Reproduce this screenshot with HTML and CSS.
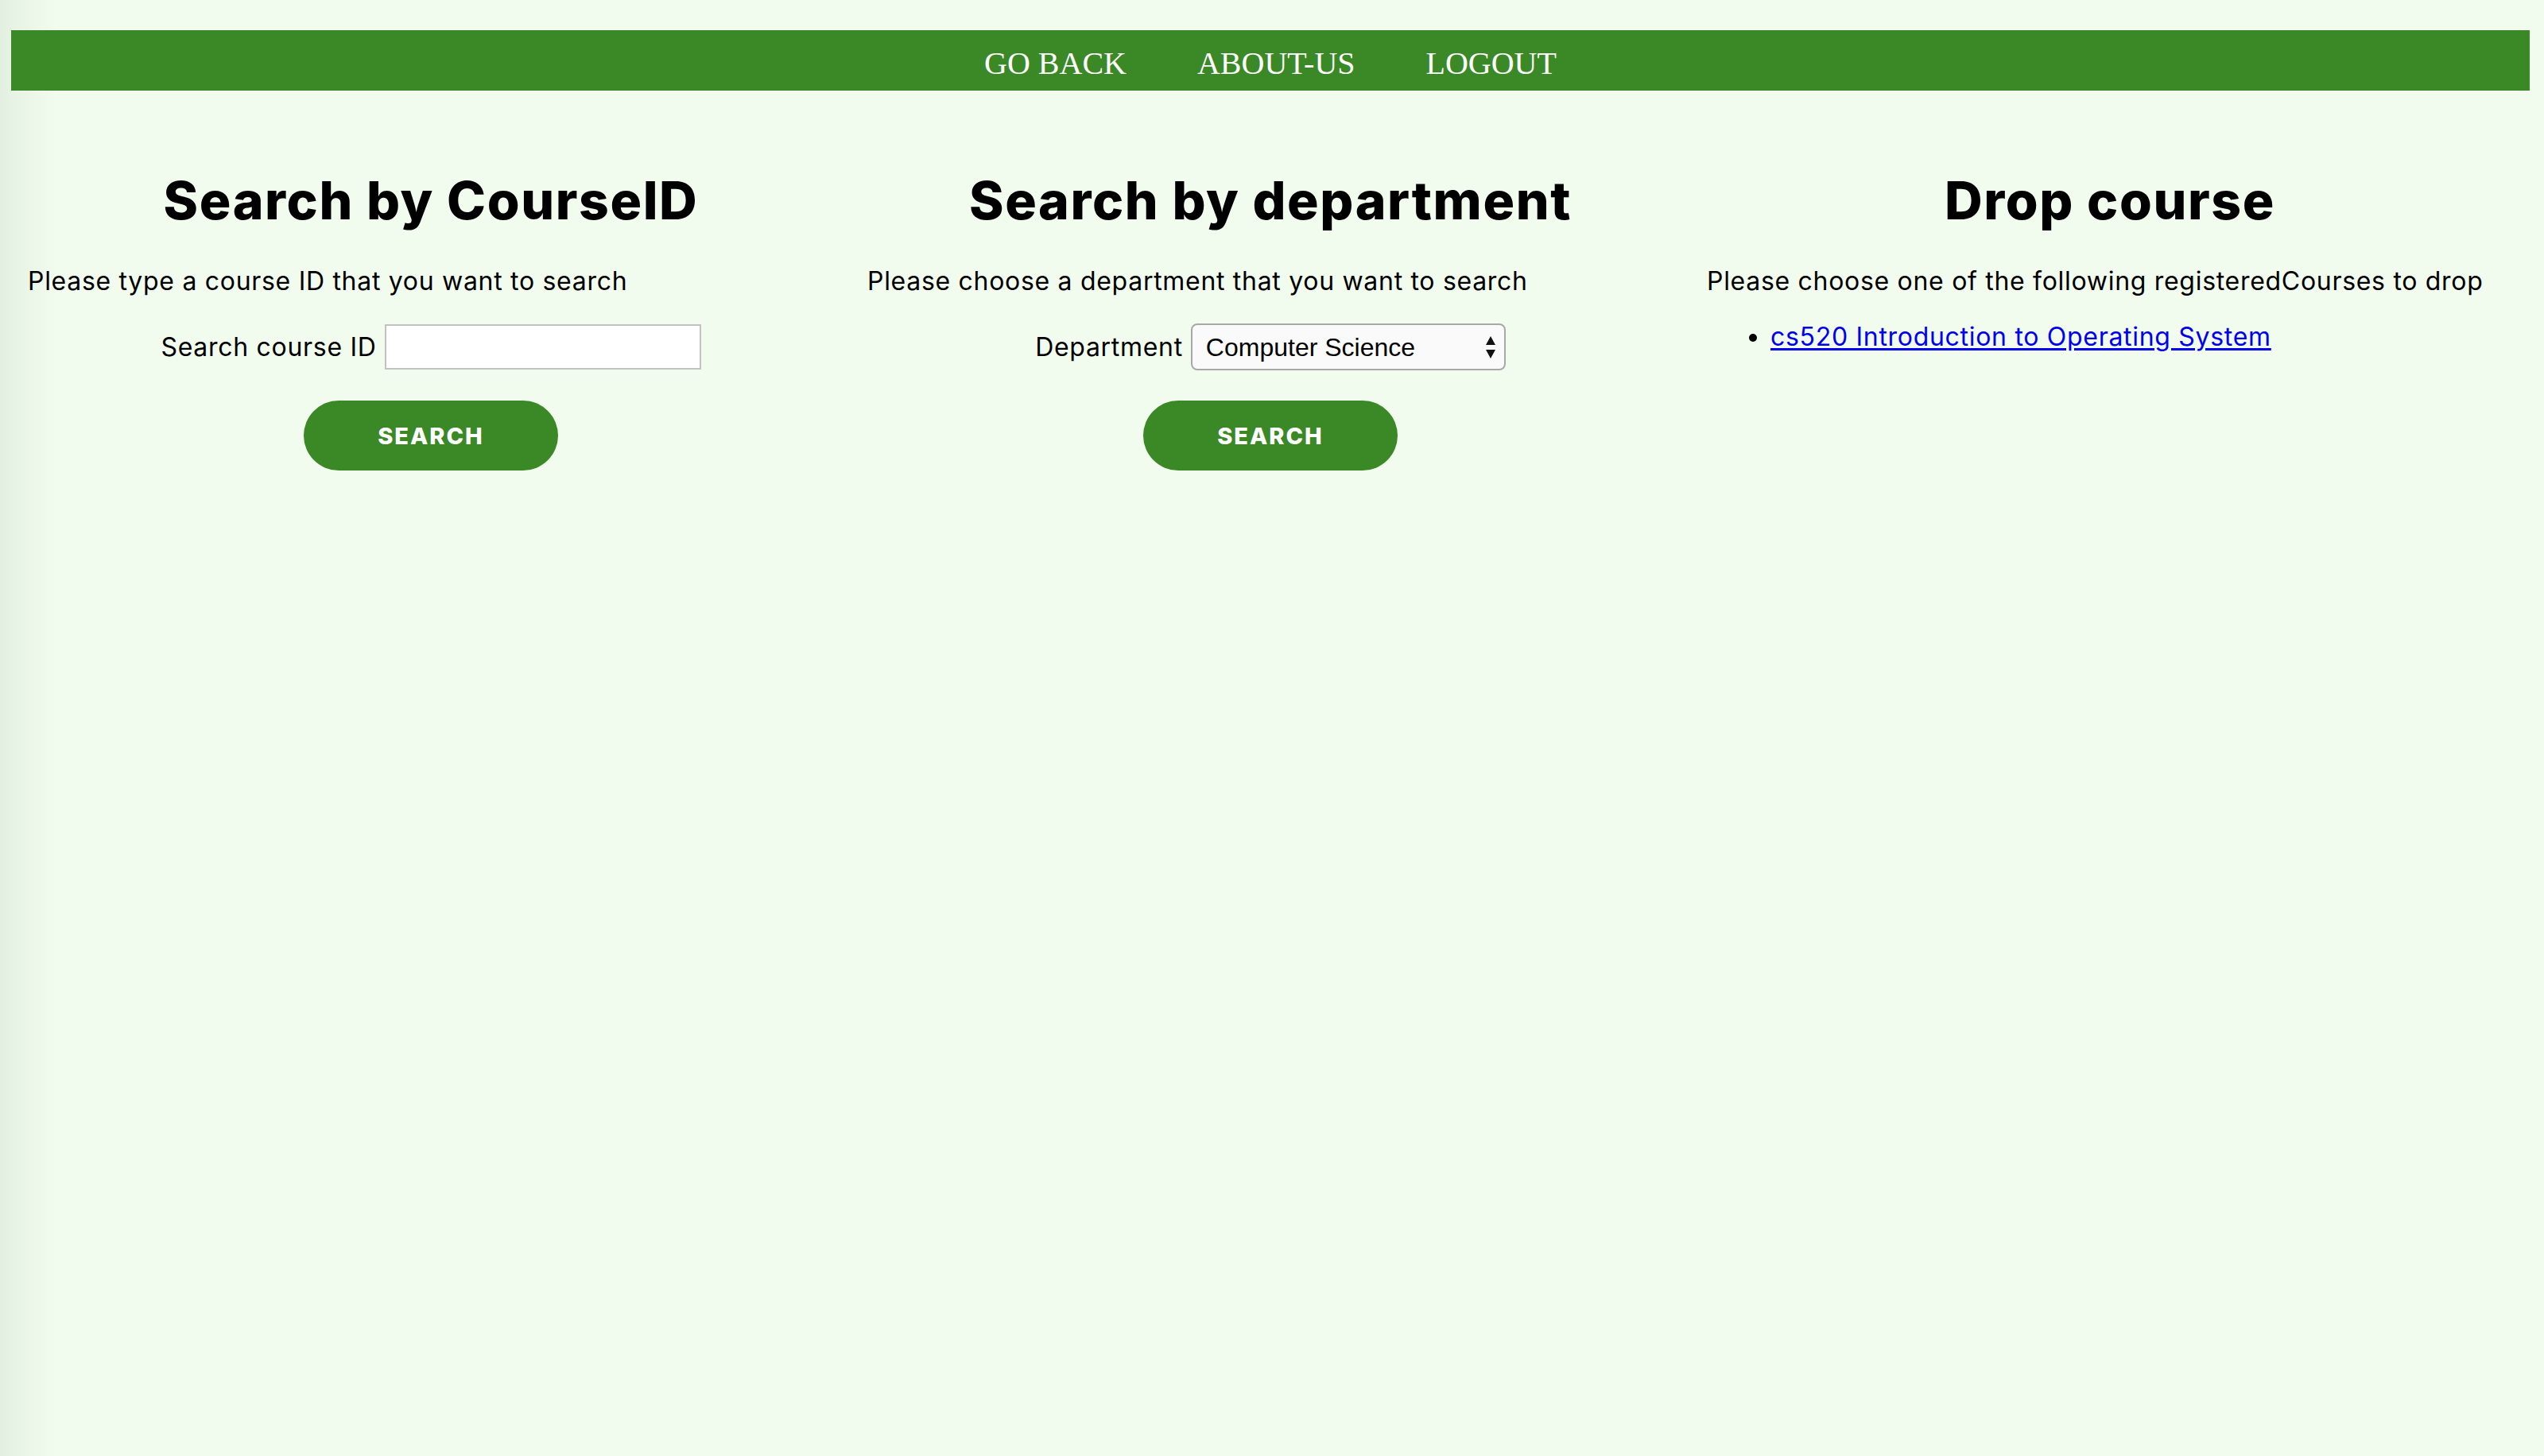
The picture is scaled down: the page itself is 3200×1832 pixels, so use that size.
FILE: index.html
```html
<!DOCTYPE html>
<html lang="en">
<head>
<meta charset="utf-8">
<title>Course search</title>
<link rel="stylesheet" href="styles.css">
</head>
<body>
<nav class="topnav">
  <a class="nav-link" href="#">GO BACK</a>
  <a class="nav-link" href="#">ABOUT-US</a>
  <a class="nav-link" href="#">LOGOUT</a>
</nav>
<main class="columns">
  <section class="col">
    <h1 class="col-title">Search by CourseID</h1>
    <p class="col-text">Please type a course ID that you want to search</p>
    <div class="field-row">
      <label class="field-label" for="cid">Search course ID</label>
      <input class="text-input" id="cid" type="text">
    </div>
    <div class="btn-row"><button class="btn">SEARCH</button></div>
  </section>
  <section class="col">
    <h1 class="col-title">Search by department</h1>
    <p class="col-text">Please choose a department that you want to search</p>
    <div class="field-row">
      <label class="field-label" for="dept">Department</label>
      <div class="select-wrap">
        <select class="select" id="dept">
          <option>Computer Science</option>
        </select>
        <svg class="select-arrows" width="14" height="28" viewBox="0 0 14 28"><polygon points="7,0 13,11 1,11" fill="#111"/><polygon points="1,17 13,17 7,28" fill="#111"/></svg>
      </div>
    </div>
    <div class="btn-row"><button class="btn">SEARCH</button></div>
  </section>
  <section class="col">
    <h1 class="col-title">Drop course</h1>
    <p class="col-text">Please choose one of the following registeredCourses to drop</p>
    <ul class="course-list">
      <li><a class="course-link" href="#">cs520 Introduction to Operating System</a></li>
    </ul>
  </section>
</main>
</body>
</html>
```

FILE: styles.css
```css
html {
  background: #f1fcef;
  min-height: 100%;
}
body {
  margin: 0;
  padding: 38px 18px 0 14px;
  min-height: 1832px;
  box-sizing: border-box;
  background: linear-gradient(to right, rgba(0, 40, 0, 0.06), rgba(0, 40, 0, 0) 70px);
  font-family: Inter, "Liberation Sans", sans-serif;
  color: #000;
}
.topnav {
  height: 76px;
  box-sizing: border-box;
  padding-top: 20px;
  background: #3b8826;
  display: flex;
  justify-content: center;
  gap: 89px;
}
.nav-link {
  font-family: "Liberation Serif", "Times New Roman", serif;
  font-size: 40px;
  line-height: 44px;
  color: #fff;
  text-decoration: none;
}
.columns {
  display: grid;
  grid-template-columns: 1fr 1fr 1fr;
}
.col {
  padding: 0 21px;
}
.col-title {
  margin: 100px 0 0;
  text-align: center;
  font-size: 66px;
  line-height: 77px;
  font-weight: 800;
  letter-spacing: 1.6px;
}
.col-text {
  margin: 43px 0 0;
  font-size: 32px;
  line-height: 40px;
  font-weight: 400;
  letter-spacing: 0.7px;
}
.field-row {
  margin-top: 33px;
  height: 59px;
  display: flex;
  align-items: center;
  justify-content: center;
  gap: 10px;
}
.field-label {
  font-size: 32px;
  line-height: 40px;
  letter-spacing: 0.7px;
}
.text-input {
  width: 398px;
  height: 57px;
  box-sizing: border-box;
  border: 2px solid #c2c2c2;
  background: #fff;
  margin: 0;
  padding: 0 8px;
  font-size: 28px;
}
.select-wrap {
  position: relative;
}
.select {
  appearance: none;
  -webkit-appearance: none;
  width: 396px;
  height: 59px;
  box-sizing: border-box;
  border: 2px solid #a8a8a8;
  border-radius: 8px;
  background: #fafafa;
  padding: 0 0 0 17px;
  margin: 0;
  font-family: "Liberation Sans", Arial, sans-serif;
  font-size: 32px;
  color: #000;
}
.select-arrows {
  position: absolute;
  right: 12px;
  top: 16px;
}
.btn-row {
  display: flex;
  justify-content: center;
  margin-top: 38px;
}
.btn {
  width: 320px;
  height: 88px;
  border: none;
  border-radius: 44px;
  background: #3b8826;
  color: #fff;
  font-family: Inter, "Liberation Sans", sans-serif;
  font-size: 29px;
  font-weight: 800;
  letter-spacing: 2px;
  padding: 0;
}
.course-list {
  margin: 30px 0 0;
  padding-left: 80px;
  font-size: 32px;
  line-height: 40px;
  letter-spacing: 0.7px;
}
.course-link {
  color: #0000ee;
  text-decoration: underline;
  text-underline-offset: 3px;
}
```
